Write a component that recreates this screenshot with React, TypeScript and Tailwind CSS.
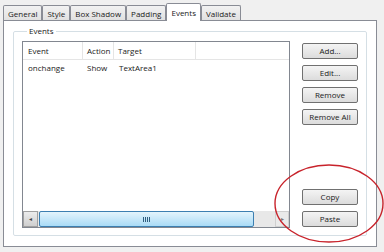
const tabs = ["General", "Style", "Box Shadow", "Padding", "Events", "Validate"];

function WinButton({ label }: { label: string }) {
  return (
    <button className="h-[16px] w-[56px] rounded-[2px] border border-[#707070] bg-gradient-to-b from-[#f4f4f4] to-[#dcdcdc] text-[8px] leading-none text-[#1a1a1a]">
      {label}
    </button>
  );
}

export default function App() {
  return (
    <div
      className="relative h-[252px] w-[384px] overflow-hidden bg-[#f0f0f0] text-[8px] text-[#1a1a1a]"
      style={{ fontFamily: '"Open Sans", "Noto Sans", sans-serif' }}
    >
      {/* tab strip */}
      <div className="flex h-[20px] items-end pl-[3px]">
        {tabs.map((t) => {
          const active = t === "Events";
          return (
            <div
              key={t}
              className={
                active
                  ? "relative z-10 -mb-px flex h-[18px] items-center rounded-t-[2px] border border-b-0 border-[#898c95] bg-white px-[4px] pt-[1px]"
                  : "flex h-[15px] items-center rounded-t-[2px] border border-b-0 border-[#898c95] bg-gradient-to-b from-[#f2f2f2] to-[#e1e1e1] px-[4px] pt-[1px]"
              }
            >
              {t}
            </div>
          );
        })}
      </div>

      {/* panel */}
      <div className="ml-[3px] h-[227px] w-[374px] border border-[#898c95] bg-white px-[9px] pt-[4px]">
        <fieldset className="h-[211px] rounded-[2px] border border-[#d5dfe5] px-[8px] pb-[7px] pt-[4px]">
          <legend className="ml-[5px] px-[2px] leading-[12px]">Events</legend>
          <div className="flex h-full gap-[12px]">
            {/* list view */}
            <div className="flex w-[268px] flex-col border border-[#828790] bg-white">
              <div className="flex h-[18px] items-center border-b border-[#e5e5e5]">
                <div className="h-full w-[60px] border-r border-[#e5e5e5] pl-[5px] leading-[17px]">Event</div>
                <div className="h-full w-[31px] border-r border-[#e5e5e5] pl-[4px] leading-[17px]">Action</div>
                <div className="h-full w-[82px] border-r border-[#e5e5e5] pl-[4px] leading-[17px]">Target</div>
              </div>
              <div className="flex h-[16px] items-center">
                <div className="w-[60px] pl-[5px]">onchange</div>
                <div className="w-[31px] pl-[4px]">Show</div>
                <div className="pl-[5px]">TextArea1</div>
              </div>
              <div className="flex-1" />
              {/* horizontal scrollbar */}
              <div className="flex h-[16px] items-stretch bg-[#e8e8e8]">
                <div className="flex w-[15px] items-center justify-center border border-[#a0a0a0] bg-gradient-to-b from-[#ececec] to-[#cfcfcf] text-[6px] text-[#444]">
                  ◂
                </div>
                <div className="mx-px flex w-[215px] items-center justify-center gap-[1px] rounded-[2px] border border-[#3c7fb1] bg-gradient-to-b from-[#e3f4fc] to-[#a9dbf6]">
                  <span className="h-[5px] w-[1px] bg-[#2e5e80]" />
                  <span className="h-[5px] w-[1px] bg-[#2e5e80]" />
                  <span className="h-[5px] w-[1px] bg-[#2e5e80]" />
                  <span className="h-[5px] w-[1px] bg-[#2e5e80]" />
                </div>
                <div className="flex-1" />
                <div className="flex w-[14px] items-center justify-center border border-[#cfcfcf] bg-[#eaeaea] text-[6px] text-[#777]">
                  ▸
                </div>
              </div>
            </div>

            {/* buttons */}
            <div className="flex flex-col pt-[2px]">
              <div className="flex flex-col gap-[6px]">
                <WinButton label="Add..." />
                <WinButton label="Edit..." />
                <WinButton label="Remove" />
                <WinButton label="Remove All" />
              </div>
              <div className="flex-1" />
              <div className="flex flex-col gap-[6px] pb-[1px]">
                <WinButton label="Copy" />
                <WinButton label="Paste" />
              </div>
            </div>
          </div>
        </fieldset>
      </div>

      {/* red annotation ellipse */}
      <svg className="absolute left-0 top-0" width="384" height="252">
        <ellipse cx="329" cy="203.5" rx="54" ry="38.5" fill="none" stroke="#c8232b" strokeWidth="1.4" />
      </svg>
    </div>
  );
}
